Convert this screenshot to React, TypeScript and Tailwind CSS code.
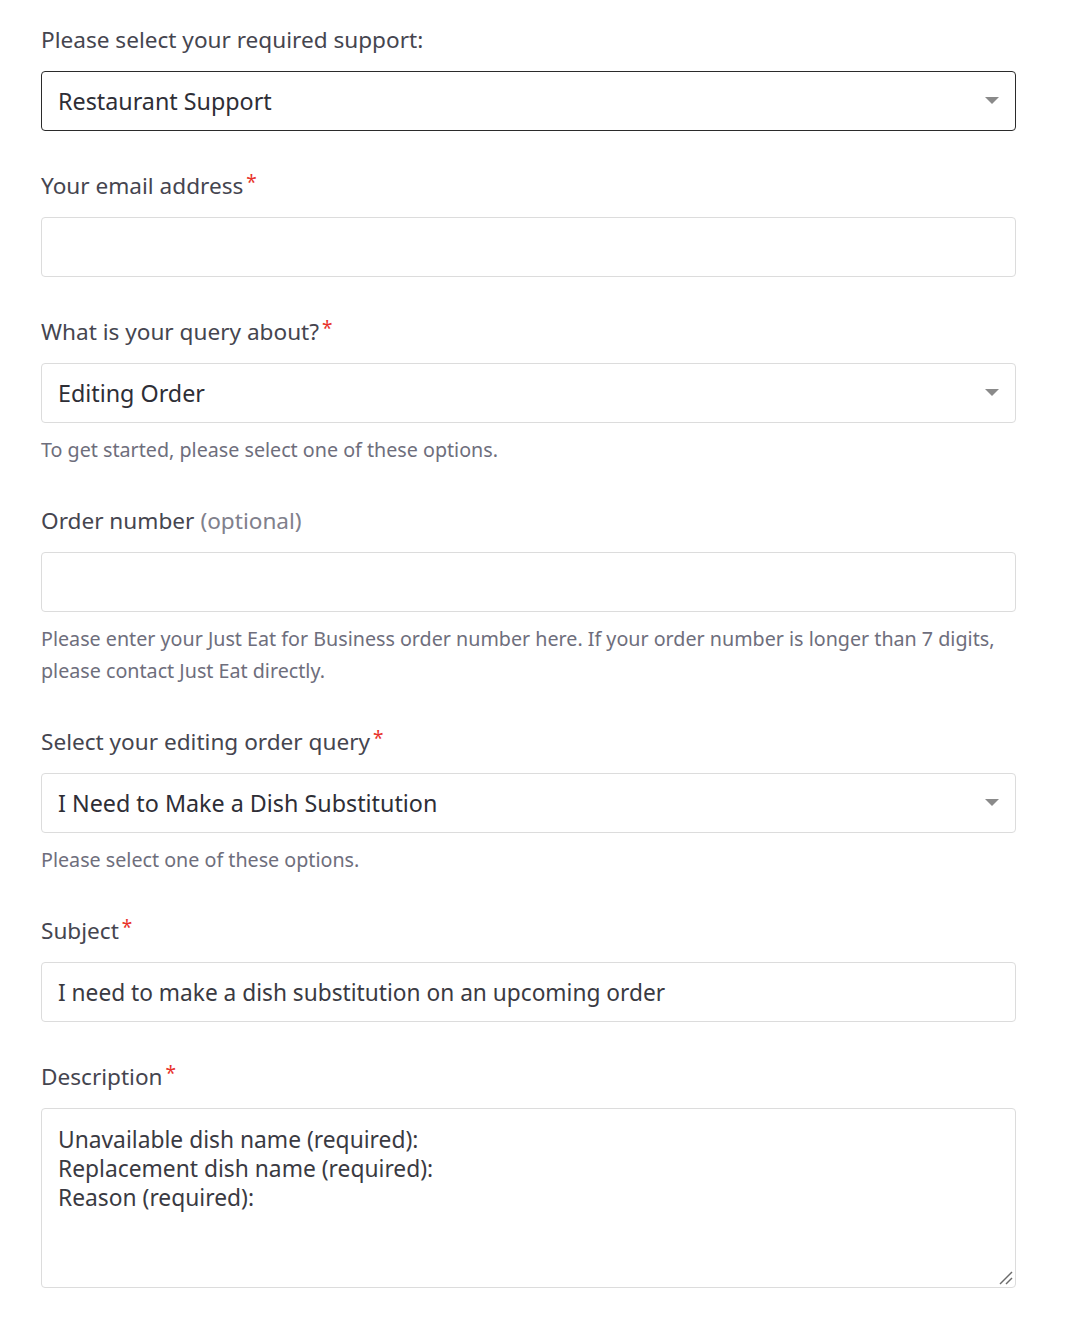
import React from "react";

const FONT = { fontFamily: '"Noto Sans", "Liberation Sans", sans-serif' };

function Arrow() {
  return (
    <svg width="14" height="8" viewBox="0 0 14 8" className="shrink-0">
      <polygon points="0,0 14,0 7,7" fill="#8a8a8a" />
    </svg>
  );
}

function Label({ children, req, optional }: { children: React.ReactNode; req?: boolean; optional?: boolean }) {
  return (
    <div className="text-[22.6px] leading-[32px] text-[#45454f] mb-[15px] flex items-start">
      <span>{children}</span>
      {optional && <span className="text-[#80808c] ml-[6px]">(optional)</span>}
      {req && <span className="text-[#e8332b] text-[19px] leading-[24px] ml-[3px]">*</span>}
    </div>
  );
}

function SelectBox({ value, dark }: { value: string; dark?: boolean }) {
  return (
    <div
      className={`h-[60px] rounded-[4px] border flex items-center justify-between pl-[16px] pr-[16px] bg-white ${
        dark ? "border-[#2b2b2b]" : "border-[#dcdcdc]"
      }`}
    >
      <span className="text-[23.3px] text-[#2e2e36]">{value}</span>
      <Arrow />
    </div>
  );
}

function TextBox({ value }: { value?: string }) {
  return (
    <input
      readOnly
      value={value ?? ""}
      className="block w-full h-[60px] rounded-[4px] border border-[#dcdcdc] px-[16px] text-[22.7px] text-[#3a3a42] bg-white outline-none"
      style={FONT}
    />
  );
}

function Hint({ children }: { children: React.ReactNode }) {
  return <div className="mt-[11px] text-[19.7px] leading-[32px] text-[#6e6e7c]">{children}</div>;
}

export default function App() {
  return (
    <div className="min-h-[1320px] bg-white pt-[24px] pl-[41px]" style={FONT}>
      <div className="w-[975px] flex flex-col gap-[39px]">
        <div>
          <Label>Please select your required support:</Label>
          <SelectBox value="Restaurant Support" dark />
        </div>
        <div>
          <Label req>Your email address</Label>
          <TextBox />
        </div>
        <div>
          <Label req>What is your query about?</Label>
          <SelectBox value="Editing Order" />
          <Hint>To get started, please select one of these options.</Hint>
        </div>
        <div>
          <Label optional>Order number</Label>
          <TextBox />
          <Hint>
            Please enter your Just Eat for Business order number here. If your order number is longer than 7 digits,
            please contact Just Eat directly.
          </Hint>
        </div>
        <div>
          <Label req>Select your editing order query</Label>
          <SelectBox value="I Need to Make a Dish Substitution" />
          <Hint>Please select one of these options.</Hint>
        </div>
        <div>
          <Label req>Subject</Label>
          <TextBox value="I need to make a dish substitution on an upcoming order" />
        </div>
        <div>
          <Label req>Description</Label>
          <div className="relative">
            <textarea
              readOnly
              value={"Unavailable dish name (required):\nReplacement dish name (required):\nReason (required):"}
              className="block w-full h-[180px] resize-none rounded-[4px] border border-[#dcdcdc] px-[16px] pt-[16px] text-[22.8px] leading-[29px] text-[#3a3a42] bg-white outline-none"
              style={FONT}
            />
            <svg width="16" height="16" viewBox="0 0 16 16" className="absolute right-[2px] bottom-[2px]">
              <line x1="2" y1="14" x2="14" y2="2" stroke="#6a6a6a" strokeWidth="1.5" />
              <line x1="8" y1="14" x2="14" y2="8" stroke="#6a6a6a" strokeWidth="1.5" />
            </svg>
          </div>
        </div>
      </div>
    </div>
  );
}
